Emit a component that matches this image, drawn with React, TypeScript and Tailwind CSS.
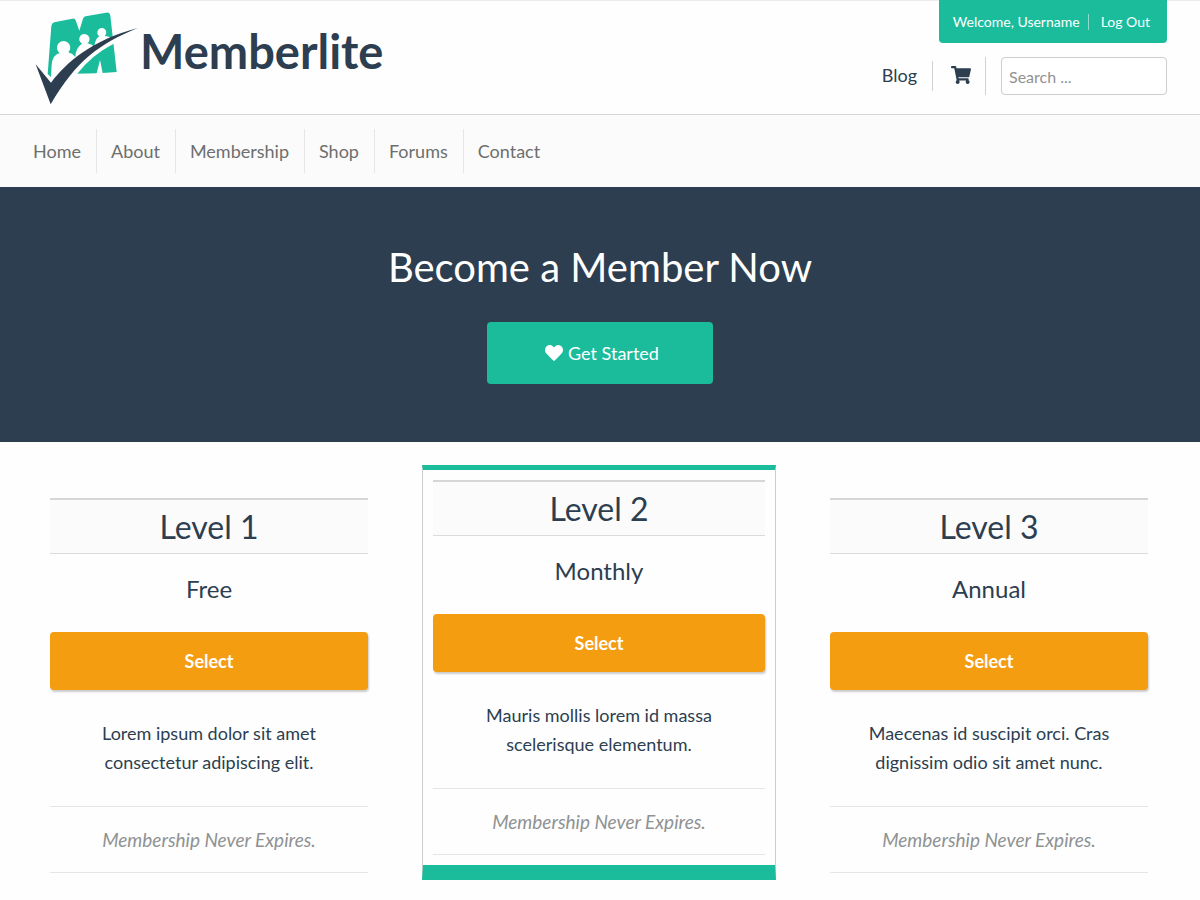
import { FaHeart, FaShoppingCart } from "react-icons/fa";

const navItems = ["Home", "About", "Membership", "Shop", "Forums", "Contact"];

type Level = {
  name: string;
  price: string;
  text: string;
  featured?: boolean;
};

const levels: Level[] = [
  { name: "Level 1", price: "Free", text: "Lorem ipsum dolor sit amet consectetur adipiscing elit." },
  { name: "Level 2", price: "Monthly", text: "Mauris mollis lorem id massa scelerisque elementum.", featured: true },
  { name: "Level 3", price: "Annual", text: "Maecenas id suscipit orci. Cras dignissim odio sit amet nunc." },
];

function LogoMark() {
  return (
    <svg viewBox="45 30 315 285" className="h-[95px] w-[105px] shrink-0" aria-hidden="true">
      <path
        fill="#1abc9c"
        d="M103 67 L157 56 Q165 55 167 61 L178 92 L189 56 Q191 50 197 49 L258 38 Q269 36 271 47 L290 216 L248 219 L240 180 L230 220 L165 221 L92 230 L83 222 L94 78 Q95 69 103 67Z"
      />
      <path
        fill="#fefefe"
        d="M93 228 L95 196 Q97 164 119 159 A20 20 0 1 1 145 157 Q158 160 166 171 Q167 143 186 131 A15.500 15.500 0 1 1 202 130 Q218 133 223 142 Q224 117 238 109 A13.500 13.500 0 1 1 254 108 Q266 108 272 114 L352 84 L281 131 Q215 165 172 221 L110 300 Z"
      />
      <path
        fill="#2c3e50"
        d="M47 193 L93 248 C140 186 215 121 353 84 C240 130 168 182 92 313 Z"
      />
    </svg>
  );
}

function LevelCard({ level }: { level: Level }) {
  return (
    <article
      className={
        level.featured
          ? "border-x border-t-[5px] border-b-[15px] border-x-[#cccccc] border-y-[#1abc9c] p-2.5"
          : "mt-[33px] px-[18px]"
      }
    >
      <h2 className="border-t-2 border-b border-t-[#d4d6d7] border-b-[#d9dcde] bg-[#fbfbfc] py-1.5 text-[32px] leading-[41px]">
        {level.name}
      </h2>
      <p className="mt-4 text-2xl leading-[38px]">{level.price}</p>
      <button
        type="button"
        className="mt-6 h-[58px] w-full rounded bg-[#f59d10] text-lg font-bold text-white shadow-[1px_2px_2px_rgba(0,0,0,0.2)]"
      >
        Select
      </button>
      <p className="mt-[29px] px-9 leading-[29px]">{level.text}</p>
      <p className="mt-[29px] border-y border-[#e3e5e7] py-[18px] text-[19px] leading-[29px] text-[#8f9293] italic">
        Membership Never Expires.
      </p>
    </article>
  );
}

export default function App() {
  return (
    <div className="min-h-screen bg-[#fefefe] font-['Lato',sans-serif] text-lg text-[#2c3e50]">
      <header className="flex items-start justify-between border-y border-t-[#ececec] border-b-[#d6d6d6] pr-[33px] pb-[9px] pl-[35px]">
        <a href="#" className="flex items-start pt-[9px]">
          <LogoMark />
          <span className="pt-[11px] text-[47px] leading-[60px] font-bold">Memberlite</span>
        </a>
        <div className="flex flex-col items-end gap-3.5">
          <div className="-mt-px flex h-[43px] items-center rounded-b bg-[#1abc9c] px-3.5 text-sm leading-4 text-white">
            <a href="#" className="border-r border-[#8fdccb] pr-2">
              Welcome, Username
            </a>
            <a href="#" className="pr-[3px] pl-3">
              Log Out
            </a>
          </div>
          <div className="flex items-center">
            <a href="#" className="border-r border-[#cfd1d2] pr-[15px] pb-0.5 leading-7">
              Blog
            </a>
            <a
              href="#"
              aria-label="Cart"
              className="flex h-[38px] items-center border-r border-[#cfd1d2] pr-3.5 pb-0.5 pl-[18px]"
            >
              <FaShoppingCart className="size-5" />
            </a>
            <input
              type="search"
              aria-label="Search"
              placeholder="Search ..."
              className="ml-[15px] h-[38px] w-[166px] rounded border border-[#cccccc] bg-white px-[7px] text-base placeholder:text-[#929292]"
            />
          </div>
        </div>
      </header>

      <nav className="bg-[#fbfbfc] px-[19px] py-3.5">
        <ul className="flex divide-x divide-[#e3e7ea]">
          {navItems.map((item) => (
            <li key={item}>
              <a href="#" className="block pr-[15px] pl-3.5 leading-[44px] text-[#6d6f6d]">
                {item}
              </a>
            </li>
          ))}
        </ul>
      </nav>

      <section className="flex flex-col items-center bg-[#2c3e50] pt-[50px] pb-[58px] text-white">
        <h1 className="text-[40px] leading-[60px]">Become a Member Now</h1>
        <button
          type="button"
          className="mt-[25px] flex h-[62px] items-center gap-[5px] rounded bg-[#1abc9c] pr-[54px] pl-[58px] text-lg"
        >
          <FaHeart className="size-[18px]" />
          Get Started
        </button>
      </section>

      <main className="grid grid-cols-3 items-start gap-9 pt-[23px] pr-[34px] pb-5 pl-8 text-center">
        {levels.map((level) => (
          <LevelCard key={level.name} level={level} />
        ))}
      </main>
    </div>
  );
}
